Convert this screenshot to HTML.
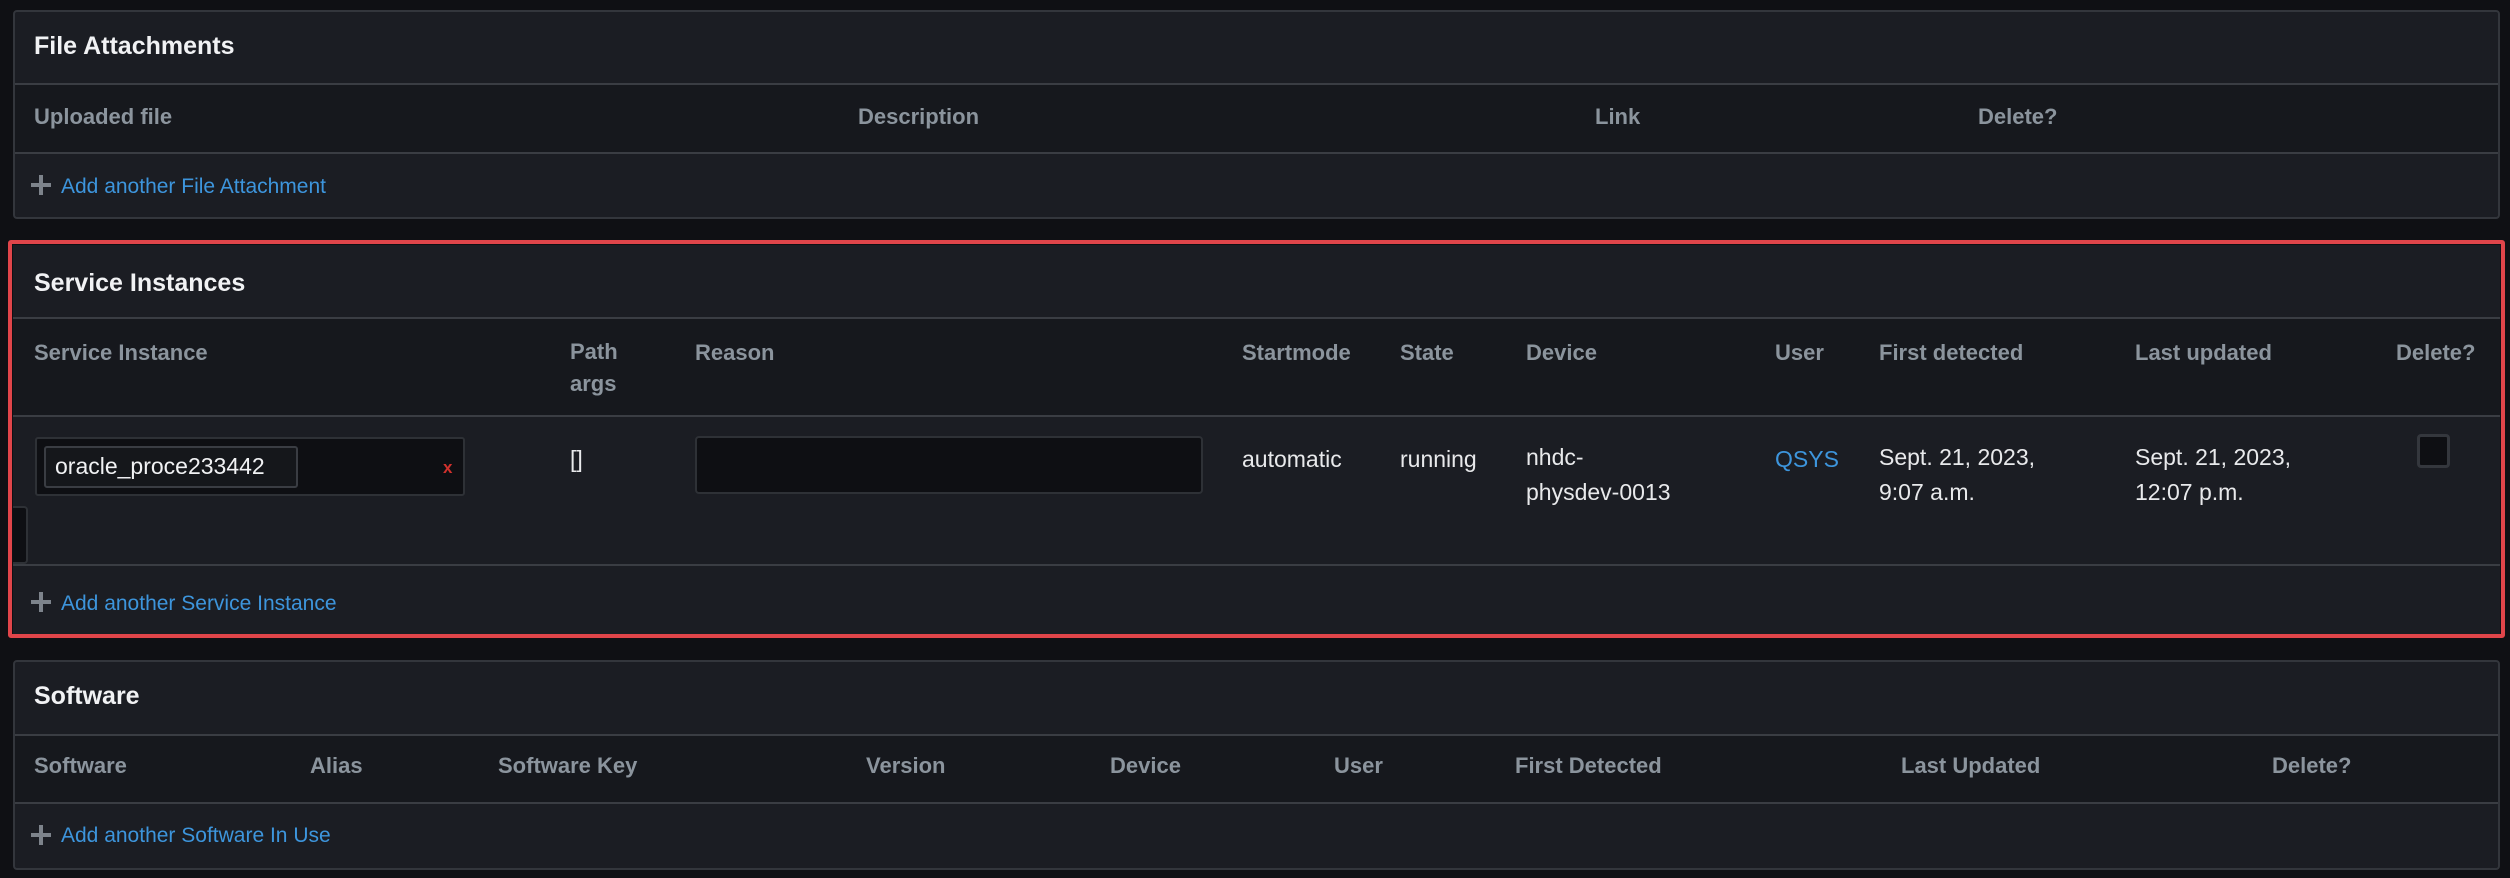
<!DOCTYPE html>
<html><head><meta charset="utf-8"><style>
*{margin:0;padding:0;box-sizing:border-box}
body{width:2510px;height:878px;background:#0f1014;font-family:"Liberation Sans",sans-serif;position:relative;overflow:hidden}
.p{position:absolute;left:13px;width:2487px;background:#1b1d23;border:2px solid #33363c;border-radius:4px}
.hr{position:absolute;left:0;right:0;height:2px;background:#3a3d43}
.band{position:absolute;left:0;right:0;background:#16181d}
.t{position:absolute;white-space:nowrap;line-height:1}
.ti{font-size:25px;font-weight:bold;color:#f1f2f4}
.h{font-size:22px;font-weight:bold;color:#8b949d}
.d{font-size:23px;color:#e8e9eb}
.l{font-size:21px;color:#3d95dc}
.plus{position:absolute;width:20px;height:20px}
.plus:before{content:"";position:absolute;left:8px;top:0;width:4px;height:20px;background:#7d838b}
.plus:after{content:"";position:absolute;top:8px;left:0;width:20px;height:4px;background:#7d838b}
</style></head><body>

<div class="p" style="top:10px;height:209px">
 <div class="band" style="top:73px;height:69px"></div>
 <div class="hr" style="top:71px"></div>
 <div class="hr" style="top:140px"></div>
</div>
<div class="t ti" style="left:34px;top:34px">File Attachments</div>
<div class="t h" style="left:34px;top:106px">Uploaded file</div>
<div class="t h" style="left:858px;top:106px">Description</div>
<div class="t h" style="left:1595px;top:106px">Link</div>
<div class="t h" style="left:1978px;top:106px">Delete?</div>
<div class="plus" style="left:31px;top:175px"></div>
<div class="t l" style="left:61px;top:176px">Add another File Attachment</div>

<div class="p" style="top:245px;height:390px;left:13px;width:2487px;border:none;border-radius:0;background:#1b1d23">
 <div class="band" style="top:73px;height:98px"></div>
 <div class="hr" style="top:72px"></div>
 <div class="hr" style="top:170px"></div>
 <div class="hr" style="top:319px"></div>
</div>
<div style="position:absolute;left:8px;top:240px;width:2497px;height:398px;border:4px solid #e0454a;border-radius:3px"></div>
<div class="t ti" style="left:34px;top:271px">Service Instances</div>
<div class="t h" style="left:34px;top:342px">Service Instance</div>
<div class="t h" style="left:570px;top:336px;line-height:32px">Path<br>args</div>
<div class="t h" style="left:695px;top:342px">Reason</div>
<div class="t h" style="left:1242px;top:342px">Startmode</div>
<div class="t h" style="left:1400px;top:342px">State</div>
<div class="t h" style="left:1526px;top:342px">Device</div>
<div class="t h" style="left:1775px;top:342px">User</div>
<div class="t h" style="left:1879px;top:342px">First detected</div>
<div class="t h" style="left:2135px;top:342px">Last updated</div>
<div class="t h" style="left:2396px;top:342px">Delete?</div>

<div style="position:absolute;left:35px;top:437px;width:430px;height:59px;background:#0e0f13;border:2px solid #2e3136;border-radius:3px"></div>
<div style="position:absolute;left:44px;top:446px;width:254px;height:42px;background:#15171b;border:2px solid #3a3d43;border-radius:3px"></div>
<div class="t d" style="left:55px;top:455px;color:#f1f2f4">oracle_proce233442</div>
<div class="t" style="left:443px;top:459px;font-size:17px;color:#d0312d;font-weight:bold">x</div>
<div class="t d" style="left:570px;top:448px">[]</div>
<div style="position:absolute;left:695px;top:436px;width:508px;height:58px;background:#0e0f13;border:2px solid #2e3136;border-radius:4px"></div>
<div style="position:absolute;left:13px;top:506px;width:15px;height:58px;background:#0e0f13;border:2px solid #2e3136;border-left:none;border-radius:0 4px 4px 0"></div>

<div class="t d" style="left:1242px;top:448px">automatic</div>
<div class="t d" style="left:1400px;top:448px">running</div>
<div class="t d" style="left:1526px;top:440px;line-height:35px">nhdc-<br>physdev-0013</div>
<div class="t d" style="left:1775px;top:448px;color:#3d95dc">QSYS</div>
<div class="t d" style="left:1879px;top:440px;line-height:35px">Sept. 21, 2023,<br>9:07 a.m.</div>
<div class="t d" style="left:2135px;top:440px;line-height:35px">Sept. 21, 2023,<br>12:07 p.m.</div>
<div style="position:absolute;left:2417px;top:434px;width:33px;height:34px;background:#0e0f13;border:3px solid #34373d;border-radius:4px"></div>

<div class="plus" style="left:31px;top:592px"></div>
<div class="t l" style="left:61px;top:593px">Add another Service Instance</div>

<div class="p" style="top:660px;height:210px">
 <div class="band" style="top:74px;height:68px"></div>
 <div class="hr" style="top:72px"></div>
 <div class="hr" style="top:140px"></div>
</div>
<div class="t ti" style="left:34px;top:684px">Software</div>
<div class="t h" style="left:34px;top:755px">Software</div>
<div class="t h" style="left:310px;top:755px">Alias</div>
<div class="t h" style="left:498px;top:755px">Software Key</div>
<div class="t h" style="left:866px;top:755px">Version</div>
<div class="t h" style="left:1110px;top:755px">Device</div>
<div class="t h" style="left:1334px;top:755px">User</div>
<div class="t h" style="left:1515px;top:755px">First Detected</div>
<div class="t h" style="left:1901px;top:755px">Last Updated</div>
<div class="t h" style="left:2272px;top:755px">Delete?</div>
<div class="plus" style="left:31px;top:825px"></div>
<div class="t l" style="left:61px;top:825px">Add another Software In Use</div>
</body></html>
